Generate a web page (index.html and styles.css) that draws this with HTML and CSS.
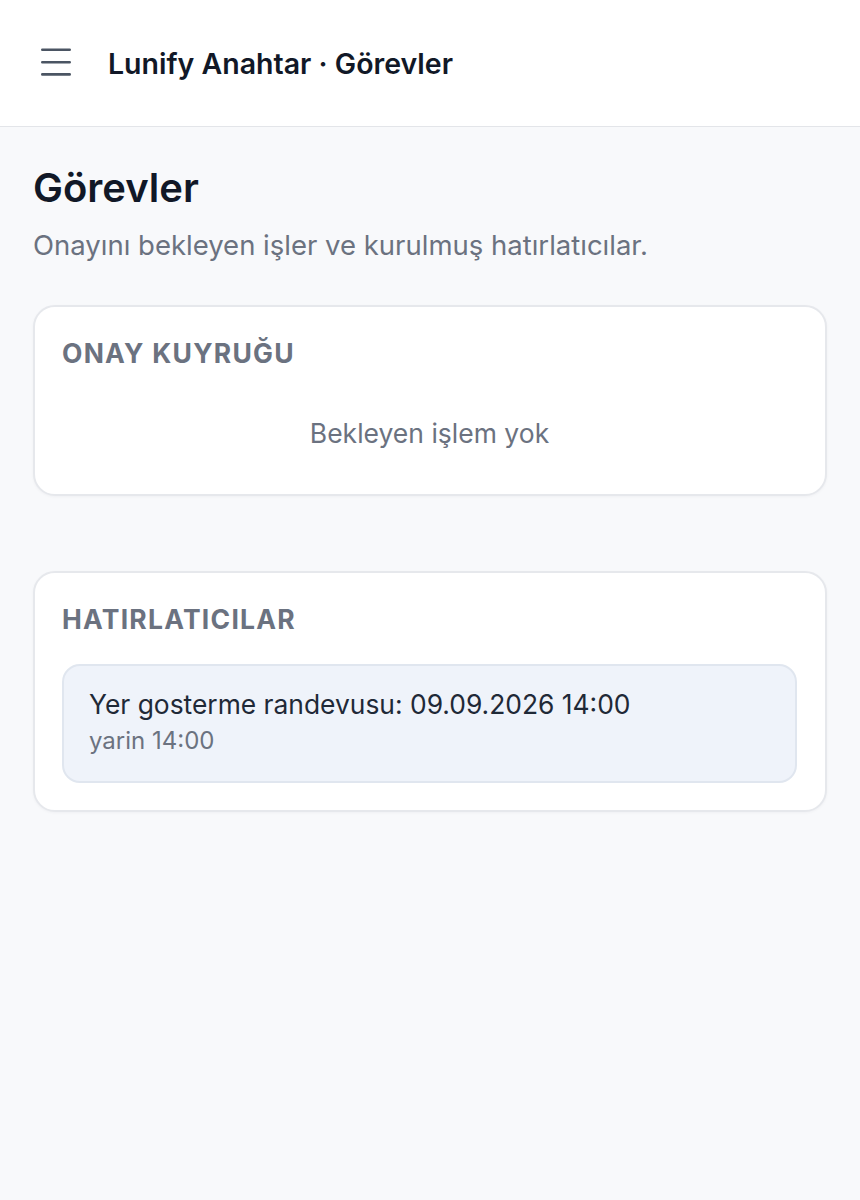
FILE: index.html
```html
<!DOCTYPE html>
<html lang="tr">
<head>
<meta charset="utf-8">
<title>Görevler</title>
<link rel="stylesheet" href="styles.css">
</head>
<body>
<header class="topbar">
  <button class="menu-btn" aria-label="Menü">
    <svg width="34" height="28" viewBox="0 0 34 28" fill="none" stroke="#4b5563" stroke-width="2.6" stroke-linecap="round">
      <path d="M3.3 1.8h27.4M3.3 14.2h27.4M3.3 26.4h27.4"/>
    </svg>
  </button>
  <div class="topbar-title">Lunify Anahtar · Görevler</div>
</header>
<main class="page">
  <h1 class="page-title">Görevler</h1>
  <p class="page-sub">Onayını bekleyen işler ve kurulmuş hatırlatıcılar.</p>

  <section class="card">
    <h2 class="card-label">Onay kuyruğu</h2>
    <div class="empty">Bekleyen işlem yok</div>
  </section>

  <section class="card card-reminders">
    <h2 class="card-label">Hatırlatıcılar</h2>
    <div class="reminder">
      <div class="reminder-title">Yer gosterme randevusu: 09.09.2026 14:00</div>
      <div class="reminder-when">yarin 14:00</div>
    </div>
  </section>
</main>
</body>
</html>
```
FILE: styles.css
```css
* { box-sizing: border-box; }
html, body { margin: 0; padding: 0; }
body {
  background: #f8f9fb;
  font-family: Inter, "Noto Sans", "Liberation Sans", sans-serif;
  color: #111827;
  min-height: 1200px;
}
.topbar {
  height: 127px;
  background: #ffffff;
  border-bottom: 1px solid #e3e5e9;
  display: flex;
  align-items: center;
  padding: 0 0 0 39px;
  gap: 35px;
}
.menu-btn {
  background: none;
  border: 0;
  padding: 0;
  margin: 0 0 3px 0;
  width: 34px;
  height: 28px;
  display: flex;
  align-items: center;
  justify-content: center;
}
.menu-btn svg { display: block; }
.topbar-title {
  font-size: 28.5px;
  line-height: 36px;
  font-weight: 600;
  color: #111827;
  margin-top: 1px;
}
.page {
  padding: 35px 33px 0 33px;
}
.page-title {
  margin: 0;
  font-size: 40px;
  line-height: 52px;
  font-weight: 600;
  color: #111827;
}
.page-sub {
  margin: 11px 0 0 0;
  font-size: 27.5px;
  line-height: 40px;
  color: #6b7280;
}
.card {
  margin-top: 40px;
  background: #ffffff;
  border: 2px solid #e6e8ec;
  border-radius: 22px;
  padding: 28px 28px 27px 27px;
  box-shadow: 0 1px 3px rgba(16, 24, 40, 0.04);
}
.card-reminders {
  margin-top: 75px;
}
.card-label {
  margin: 0;
  font-size: 26.5px;
  line-height: 36px;
  font-weight: 700;
  letter-spacing: 1.25px;
  text-transform: uppercase;
  color: #6b7280;
}
.empty {
  text-align: center;
  font-size: 26.5px;
  line-height: 40px;
  color: #6b7280;
  padding: 42px 0 14px 0;
}
.reminder {
  margin-top: 27px;
  background: #eff3fa;
  border: 2px solid #e0e6ef;
  border-radius: 18px;
  padding: 20px 25px 24px 25px;
}
.reminder-title {
  font-size: 26.4px;
  line-height: 36px;
  color: #1f2937;
}
.reminder-when {
  margin-top: 3px;
  font-size: 24px;
  line-height: 32px;
  color: #6b7280;
}
```
